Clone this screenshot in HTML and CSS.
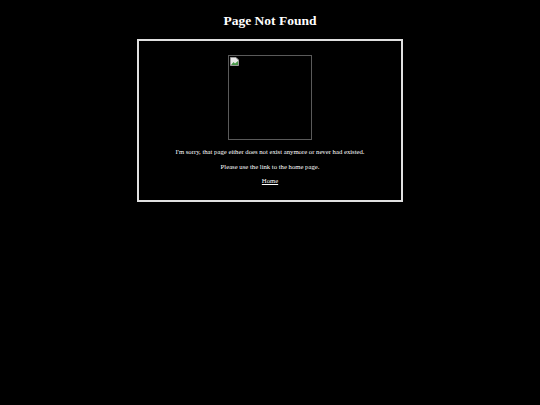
FILE: index.html
```html
<!DOCTYPE html>
<html>
<head>
<meta charset="utf-8">
<title>Page Not Found</title>
<link rel="stylesheet" href="styles.css">
</head>
<body>
<h1 class="title">Page Not Found</h1>
<div class="box">
  <div class="img">
    <svg class="broken" width="9" height="9" viewBox="0 0 9 9">
      <path d="M0.5 0.5 H6 L8.5 3 V8.5 H0.5 Z" fill="#e8e8e8" stroke="#999" stroke-width="1"/>
      <path d="M1 8 L3.5 5 L5 6.5 L8 4 V8 Z" fill="#4a9a4a"/>
    </svg>
  </div>
  <p class="msg">I'm sorry, that page either does not exist anymore or never had existed.</p>
  <p class="msg">Please use the link to the home page.</p>
  <p class="msg"><a class="home" href="#">Home</a></p>
</div>
</body>
</html>
```
FILE: styles.css
```css
html, body {
  margin: 0;
  padding: 0;
  background: #000;
  color: #fff;
  font-family: "Liberation Serif", "Times New Roman", serif;
}
.title {
  font-size: 13.5px;
  font-weight: bold;
  text-align: center;
  margin: 12px 0 9px;
  line-height: 18px;
}
.box {
  width: 262px;
  margin: 0 auto;
  border: 2px solid #e0e0e0;
  padding: 14px 0 15px;
  text-align: center;
}
.img {
  width: 82px;
  height: 83px;
  border: 1px solid #5a5a5a;
  margin: 0 auto 7px;
  text-align: left;
  position: relative;
}
.broken {
  position: absolute;
  left: 1px;
  top: 1px;
}
.msg {
  font-size: 6.7px;
  line-height: 9px;
  margin: 0 0 5.5px;
}
.msg:last-child {
  margin-bottom: 0;
}
.home {
  color: #fff;
}
```
